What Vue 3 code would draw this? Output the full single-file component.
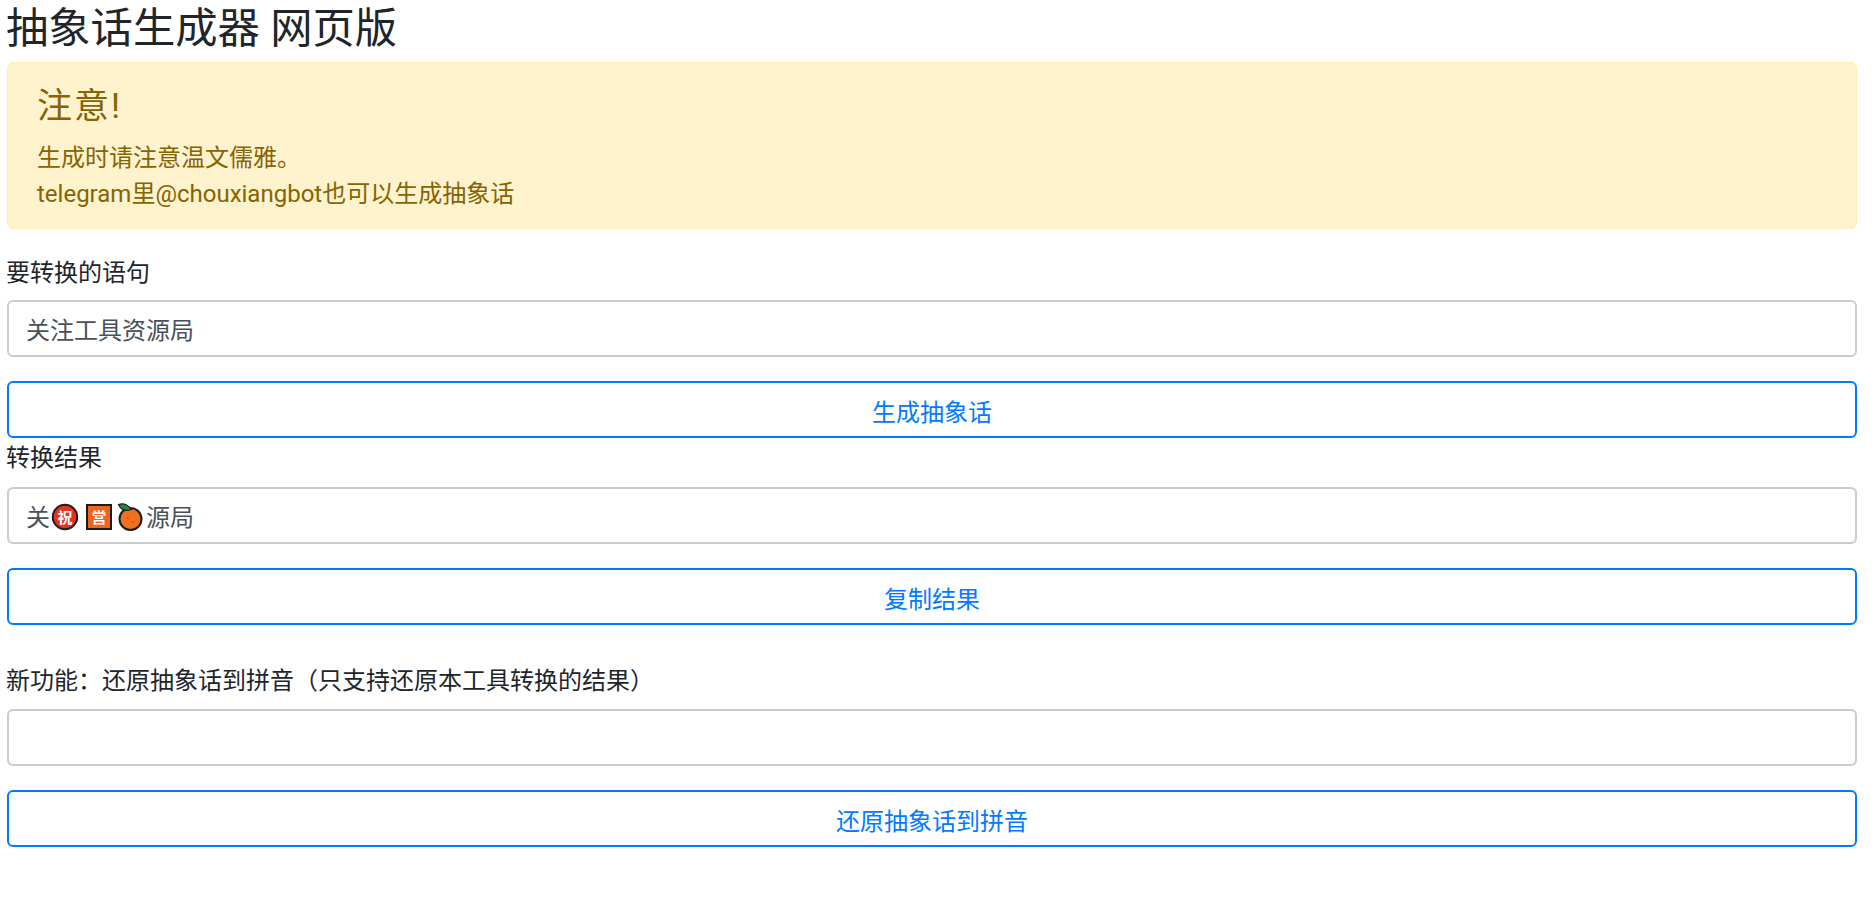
<script setup>
const emptyValue = ''
</script>

<template>
  <main class="page">
    <h1 class="title">抽象话生成器 网页版</h1>
    <section class="alert">
      <h4 class="alert-heading">注意!</h4>
      <p class="alert-line">生成时请注意温文儒雅。</p>
      <p class="alert-line">telegram里@chouxiangbot也可以生成抽象话</p>
    </section>

    <label class="label first">要转换的语句</label>
    <input class="field" value="关注工具资源局" />
    <button class="btn">生成抽象话</button>

    <label class="label tight">转换结果</label>
    <div class="field result">
      <span>关</span>
      <svg class="emoji" viewBox="0 0 32 32">
        <circle cx="15" cy="17" r="12.2" fill="#e8321f" stroke="#1c1c1c" stroke-width="2" />
        <text x="15" y="22.5" text-anchor="middle" class="etext">祝</text>
      </svg>
      <svg class="emoji" viewBox="0 0 32 32">
        <rect x="5" y="5" width="24" height="24" fill="#f2641a" stroke="#1c1c1c" stroke-width="2" />
        <text x="17" y="22.5" text-anchor="middle" class="etext">営</text>
      </svg>
      <svg class="emoji" viewBox="0 0 32 32">
        <circle cx="16.5" cy="19" r="11" fill="#f0701c" stroke="#1c1c1c" stroke-width="2" />
        <circle cx="14" cy="18" r="1" fill="#d9560f" />
        <circle cx="19" cy="22" r="1" fill="#d9560f" />
        <path d="M4.5 4.5 C9 3 14 5 17.5 9.5 C12 11.5 7 10 4.5 4.5Z" fill="#1f8a3a" stroke="#1c1c1c" stroke-width="1.2" />
      </svg>
      <span>源局</span>
    </div>
    <button class="btn">复制结果</button>

    <label class="label wide">新功能：还原抽象话到拼音（只支持还原本工具转换的结果）</label>
    <input class="field" :value="emptyValue" />
    <button class="btn">还原抽象话到拼音</button>
  </main>
</template>

<style scoped>
.page {
  display: flex;
  flex-direction: column;
  padding: 0 19px 0 6px;
  font-family: Roboto, "Noto Sans CJK SC", sans-serif;
  color: #212529;
}
.title {
  margin: 0 0 4px;
  height: 58px;
  font-size: 42.3px;
  font-weight: 400;
  line-height: 58px;
}
.alert {
  box-sizing: border-box;
  height: 167px;
  margin-left: 1px;
  padding: 19px 29px;
  background: #fff3cd;
  border: 1px solid #ffeeba;
  border-radius: 6px;
  color: #856404;
}
.alert-heading {
  margin: 0 0 9px;
  font-size: 35px;
  font-weight: 400;
  line-height: 49px;
  letter-spacing: 2px;
}
.alert-line {
  margin: 0;
  font-size: 24px;
  line-height: 36px;
}
.label {
  display: block;
  font-size: 24px;
  line-height: 36px;
}
.first { margin-top: 26px; margin-bottom: 9px; }
.tight { margin-top: 2px; margin-bottom: 11px; }
.wide { margin-top: 38px; margin-bottom: 10px; }
.field {
  box-sizing: border-box;
  display: flex;
  align-items: center;
  width: calc(100% - 1px);
  height: 57px;
  margin-left: 1px;
  padding: 0 17px;
  background: #fff;
  border: 2px solid #cccccc;
  border-radius: 6px;
  color: #495057;
  font-family: inherit;
  font-size: 24px;
  outline: none;
}
.emoji {
  width: 32px;
  height: 32px;
  flex: none;
}
.etext {
  fill: #fff;
  font-size: 15px;
  font-weight: 700;
  font-family: "Noto Sans CJK SC", sans-serif;
}
.btn {
  box-sizing: border-box;
  width: calc(100% - 1px);
  height: 57px;
  margin: 24px 0 0 1px;
  padding-top: 2px;
  background: #fff;
  border: 2px solid #007bff;
  border-radius: 6px;
  color: #007bff;
  font-family: inherit;
  font-size: 24px;
  cursor: pointer;
}
</style>
